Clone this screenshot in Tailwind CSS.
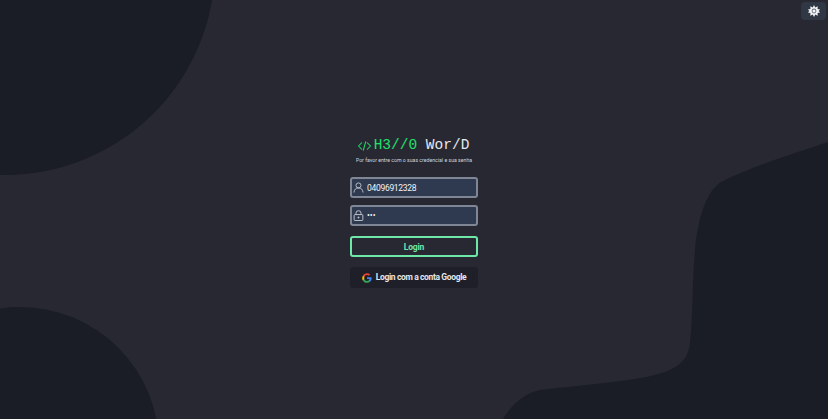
<!DOCTYPE html>
<html lang="en">

<head>
    <meta charset="UTF-8">
    <meta name="viewport" content="width=device-width, initial-scale=1.0">
    <title>Login</title>
    <script src="https://cdn.jsdelivr.net/npm/@tailwindcss/browser@4"></script>
</head>

<body class="bg-[#282833] h-screen overflow-hidden font-['Roboto',sans-serif]">
    <!-- background shapes -->
    <svg class="absolute inset-0 w-full h-full" viewBox="0 0 828 419" fill="#1a1c26">
        <circle cx="5" cy="-35" r="210" />
        <circle cx="20" cy="446" r="139" />
        <path d="M828 142 C790 155 755 165 723 181 C708 188 698 215 695 250 C692 285 693 315 690 343 C688 358 682 365 665 372 C640 381 590 384 540 390 C525 393 512 404 503 419 L828 419 Z" />
    </svg>

    <button class="absolute top-[2px] right-[2px] w-[25px] h-[18px] bg-[#303745] rounded-sm flex items-center justify-center">
        <svg class="w-[12px] h-[12px]" viewBox="0 0 24 24">
            <path fill="#f3f4f6" d="M12 0l2.500 5 5-2.500-.5 5.500 5.500 1-3.500 3 3.500 3-5.500 1 .5 5.500-5-2.500-2.500 5-2.500-5-5 2.500.5-5.500-5.500-1 3.500-3-3.500-3 5.500-1-.5-5.500 5 2.500z" />
            <circle cx="12" cy="12" r="4.800" fill="#6b7280" />
            <circle cx="12" cy="12" r="3" fill="#f3f4f6" />
        </svg>
    </button>

    <main class="relative h-full flex flex-col items-center pt-[137px]">
        <div class="flex items-center h-[17px] -ml-[1px]">
            <svg class="w-[13px] h-[12px] mr-[3px]" viewBox="0 0 28 24" fill="none" stroke="#1de26a" stroke-width="2.200" stroke-linecap="round" stroke-linejoin="round">
                <path d="M8 5l-7 7 7 7M20 5l7 7-7 7M16.500 3l-5 18" />
            </svg>
            <h1 class="font-['Liberation_Mono',monospace] text-[14.500px] leading-[17px] whitespace-pre text-gray-200"><span class="text-[#1de26a]">H3//0</span> Wor/D</h1>
        </div>
        <p class="mt-[1px] text-[5.2px] leading-[10px] text-gray-300">Por favor entre com o suas credencial e sua senha</p>

        <form class="mt-[12px] w-[128px] flex flex-col">
            <label class="h-[21px] flex items-center gap-[3px] pl-[1px] pr-[3px] bg-[#2f3a50] border-2 border-[#7f8796] rounded-[3px]">
                <svg class="w-[11px] h-[11px] shrink-0" viewBox="0 0 24 24" fill="none" stroke="#d1d5db" stroke-width="1.800">
                    <circle cx="12" cy="7.500" r="5.500" />
                    <path d="M2 23c1-7 4-10 10-10s9 3 10 10" />
                </svg>
                <input type="text" value="04096912328" class="w-full min-w-0 pt-[1px] bg-transparent text-[8.500px] tracking-[-0.3px] text-gray-100 outline-none">
            </label>
            <label class="mt-[7px] h-[21px] flex items-center gap-[3px] pl-[1px] pr-[3px] bg-[#2f3a50] border-2 border-[#7f8796] rounded-[3px]">
                <svg class="w-[11px] h-[11px] shrink-0" viewBox="0 0 24 24" fill="none" stroke="#d1d5db" stroke-width="1.900">
                    <rect x="2.500" y="10" width="19" height="13" rx="2" />
                    <path d="M6.500 10V7a5.500 5.500 0 0 1 11 0v3" />
                    <circle cx="12" cy="16.500" r="1.200" fill="#d1d5db" />
                </svg>
                <input type="password" value="abc" class="w-full min-w-0 bg-transparent text-[8.500px] text-gray-100 outline-none">
            </label>
            <button type="button" class="mt-[10px] h-[21px] pt-[1px] border-2 border-[#6ee7a8] rounded-[3px] text-[8.500px] tracking-[-0.2px] font-bold text-[#6ee7a8]">Login</button>
            <button type="button" class="mt-[10px] h-[21px] flex items-center justify-center gap-[4px] bg-[#1e1f29] rounded-[3px] text-[8.500px] tracking-[-0.37px] font-bold text-gray-200">
                <svg class="w-[10px] h-[10px]" viewBox="0 0 24 24">
                    <path fill="#4285F4" d="M23 12.300c0-.8-.1-1.600-.2-2.300H12v4.400h6.200c-.3 1.400-1.100 2.600-2.300 3.400v2.800h3.700c2.200-2 3.400-5 3.400-8.300z" />
                    <path fill="#34A853" d="M12 23.500c3.100 0 5.700-1 7.600-2.800l-3.700-2.900c-1 .7-2.300 1.100-3.900 1.100-3 0-5.500-2-6.400-4.700H1.800v2.900c1.900 3.800 5.800 6.400 10.200 6.400z" />
                    <path fill="#FBBC05" d="M5.600 14.200c-.5-1.400-.5-3 0-4.400V6.900H1.800c-1.600 3.200-1.600 7 0 10.200l3.800-2.900z" />
                    <path fill="#EA4335" d="M12 4.800c1.700 0 3.200.6 4.400 1.700l3.300-3.300C17.700 1.300 15.100.3 12 .3 7.600.3 3.700 2.900 1.800 6.700l3.800 2.900c.9-2.800 3.400-4.800 6.400-4.800z" />
                </svg>
                Login com a conta Google
            </button>
        </form>
    </main>
</body>

</html>
